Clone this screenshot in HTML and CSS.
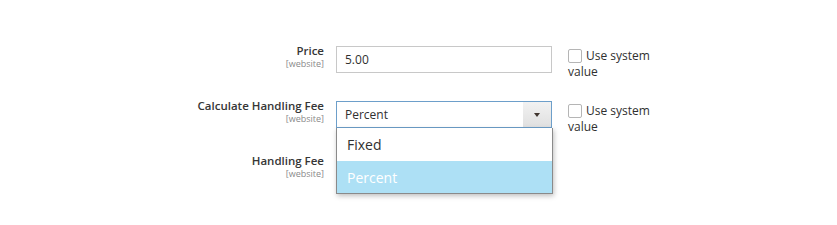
FILE: index.html
```html
<!DOCTYPE html>
<html lang="en">
<head>
  <meta charset="UTF-8">
  <title>Handling fee</title>
  <link rel="stylesheet" href="styles.css">
</head>
<body>
<div class="form">
  <div class="field">
    <div class="label">
      <span class="name">Price</span>
      <span class="scope">[website]</span>
    </div>
    <div class="control">
      <div class="input">5.00</div>
    </div>
    <label class="inherit"><span class="box"></span>Use system value</label>
  </div>

  <div class="field">
    <div class="label">
      <span class="name">Calculate Handling Fee</span>
      <span class="scope">[website]</span>
    </div>
    <div class="control">
      <div class="select">
        <span class="value">Percent</span>
        <span class="arrow"></span>
      </div>
      <ul class="options">
        <li>Fixed</li>
        <li class="selected">Percent</li>
      </ul>
    </div>
    <label class="inherit"><span class="box"></span>Use system value</label>
  </div>

  <div class="field">
    <div class="label">
      <span class="name">Handling Fee</span>
      <span class="scope">[website]</span>
    </div>
    <div class="control"></div>
  </div>
</div>
</body>
</html>
```

FILE: styles.css
```css
* {
  box-sizing: border-box;
  margin: 0;
  padding: 0;
}
html, body {
  min-height: 225px;
}
body {
  background: #fff;
  font-family: "Open Sans", sans-serif;
  color: #303030;
}
.form {
  padding: 46px 0 50px;
  display: flex;
  flex-direction: column;
  gap: 28px;
}
.field {
  display: grid;
  grid-template-columns: 324px 216px 100px;
  column-gap: 12px;
  height: 27px;
}
.label {
  display: flex;
  flex-direction: column;
  align-items: flex-end;
  margin-top: -3px;
}
.name {
  font-size: 11.5px;
  font-weight: 600;
  line-height: 16px;
  color: #363636;
}
.scope {
  font-size: 9px;
  line-height: 10px;
  color: #8a8a8a;
}
.control {
  position: relative;
}
.input {
  height: 27px;
  border: 1px solid #c8c8c8;
  padding: 0 8px;
  font-size: 12px;
  line-height: 25px;
  color: #303030;
}
.select {
  height: 27px;
  border: 1px solid #6d9fca;
  display: flex;
  font-size: 12px;
  line-height: 25px;
  color: #303030;
}
.select .value {
  flex: 1;
  padding: 0 8px;
}
.select .arrow {
  width: 28px;
  background: linear-gradient(to bottom, #f2f2f2, #e0e0e0);
  display: flex;
  align-items: center;
  justify-content: center;
}
.select .arrow::after {
  content: "";
  border-left: 3.5px solid transparent;
  border-right: 3.5px solid transparent;
  border-top: 4px solid #41362f;
}
.options {
  position: absolute;
  z-index: 10;
  top: 27px;
  left: 0;
  width: 217px;
  list-style: none;
  background: #fff;
  border: 1px solid #8a8a8a;
  border-top: none;
  box-shadow: 1px 2px 5px rgba(0, 0, 0, 0.25);
}
.options li {
  height: 32px;
  line-height: 33px;
  padding: 0 10px;
  font-size: 14px;
  color: #303030;
}
.options li:first-child {
  height: 33px;
}
.options li.selected {
  background: #ade0f5;
  color: #fff;
}
.inherit {
  margin-left: 4px;
  padding-top: 2px;
  font-size: 12px;
  line-height: 16px;
  color: #303030;
}
.inherit .box {
  display: inline-block;
  width: 14px;
  height: 14px;
  border: 1px solid #b5b5b5;
  border-radius: 2px;
  vertical-align: -3px;
  margin-right: 4px;
  background: #fff;
}
```
